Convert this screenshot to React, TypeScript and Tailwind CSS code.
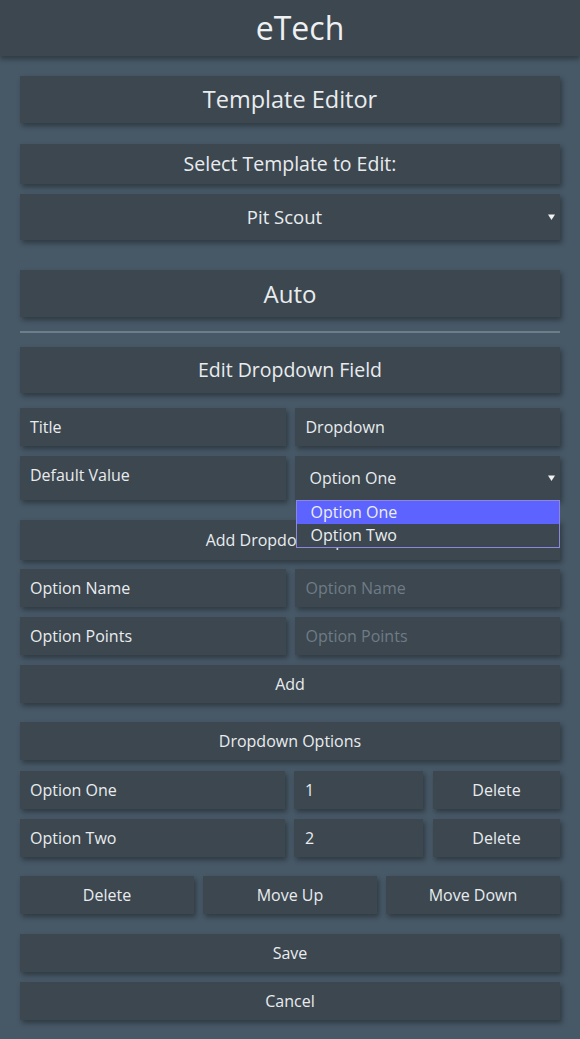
import React from 'react';

const box = 'bg-[#3c4750] shadow-[2px_3px_5px_rgba(0,0,0,0.35)]';
const card = `${box} text-[#e9ecee]`;

const Arrow: React.FC = () => (
  <svg width="7" height="7" viewBox="0 0 7 7" className="absolute right-[5px] top-1/2 -translate-y-1/2">
    <path d="M0 1 H7 L3.5 6.5 Z" fill="#f2f2f2" />
  </svg>
);

const Cell: React.FC<{ children?: React.ReactNode; className?: string; muted?: boolean }> = ({
  children,
  className = '',
  muted = false,
}) => (
  <div
    className={`${box} ${muted ? 'text-[#6f7b85]' : 'text-[#e9ecee]'} flex items-center px-2.5 text-[16px] ${className}`}
  >
    {children}
  </div>
);

const Bar: React.FC<{ children: React.ReactNode; className?: string }> = ({ children, className = '' }) => (
  <div className={`${card} flex items-center justify-center ${className}`}>{children}</div>
);

export default function App() {
  return (
    <div className="min-h-[1039px] bg-[#475866] font-['Open_Sans',sans-serif] pb-[19px]">
      <header className="h-14 bg-[#3c4750] shadow-[0_3px_5px_rgba(0,0,0,0.35)] flex items-center justify-center pl-5 text-[32px] text-[#eef0f2] relative z-10">
        eTech
      </header>

      <main className="px-5 pt-5 flex flex-col">
        <Bar className="h-[47px] text-[23.5px]">Template Editor</Bar>
        <Bar className="mt-[21px] h-10 text-[19.5px]">Select Template to Edit:</Bar>
        <Bar className="mt-2.5 h-[46px] text-[18.5px] pr-[11px] relative">
          Pit Scout
          <Arrow />
        </Bar>
        <Bar className="mt-[30px] h-[47px] text-[24px]">Auto</Bar>

        <div className="mt-[14px] h-[2px] bg-[#6d7e8b]" />

        <Bar className="mt-[14px] h-[46px] text-[19.5px]">Edit Dropdown Field</Bar>

        <div className="mt-[15px] grid grid-cols-2 gap-[9px] h-[38px]">
          <Cell>Title</Cell>
          <Cell className="pl-[11px]">Dropdown</Cell>
        </div>

        <div className="mt-2.5 grid grid-cols-2 gap-[9px] h-[44px] relative z-20">
          <div className={`${card} px-2.5 pt-[8px] text-[16px] leading-[22px]`}>Default Value</div>
          <div className="relative">
            <Cell className="h-full pl-[15px] relative">
              Option One
              <Arrow />
            </Cell>
            <div className="absolute left-px right-0 top-full border border-[#8b87de] bg-[#3c4750] text-[16px] text-[#eceff1] leading-[22px]">
              <div className="bg-[#5c63fe] pl-[14px] h-[23px]">Option One</div>
              <div className="pl-[14px] h-[23px]">Option Two</div>
            </div>
          </div>
        </div>

        <Bar className="mt-5 h-10 text-[16px]">Add Dropdown Option</Bar>

        <div className="mt-[9px] grid grid-cols-2 gap-[9px] h-[38px]">
          <Cell>Option Name</Cell>
          <Cell muted className="pl-[11px]">Option Name</Cell>
        </div>
        <div className="mt-2.5 grid grid-cols-2 gap-[9px] h-[38px]">
          <Cell>Option Points</Cell>
          <Cell muted className="pl-[11px]">Option Points</Cell>
        </div>
        <Bar className="mt-2.5 h-[38px] text-[16px]">Add</Bar>

        <Bar className="mt-[19px] h-[38px] text-[16px]">Dropdown Options</Bar>

        {[
          ['Option One', '1'],
          ['Option Two', '2'],
        ].map(([name, pts], i) => (
          <div key={name} className={`${i === 0 ? 'mt-[11px]' : 'mt-2.5'} grid grid-cols-[265px_129px_1fr] gap-[9px] h-[38px]`}>
            <Cell>{name}</Cell>
            <Cell className="pl-[11px]">{pts}</Cell>
            <Bar className="text-[16px] ml-px">Delete</Bar>
          </div>
        ))}

        <div className="mt-[19px] grid grid-cols-3 gap-[9px] h-[38px]">
          <Bar className="text-[16px]">Delete</Bar>
          <Bar className="text-[16px]">Move Up</Bar>
          <Bar className="text-[16px]">Move Down</Bar>
        </div>

        <Bar className="mt-5 h-[38px] text-[16px]">Save</Bar>
        <Bar className="mt-2.5 h-[38px] text-[16px]">Cancel</Bar>
      </main>
    </div>
  );
}
